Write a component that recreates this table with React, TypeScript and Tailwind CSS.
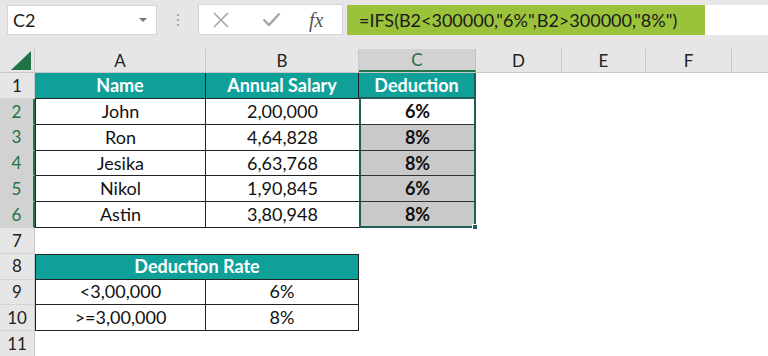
import React from 'react';

const colW = ['w-[171px]', 'w-[153px]', 'w-[117px]', 'w-[86px]', 'w-[84px]', 'w-[86px]'];
const letters = ['A', 'B', 'C', 'D', 'E', 'F'];

const people = [
  { name: 'John', salary: '2,00,000', rate: '6%' },
  { name: 'Ron', salary: '4,64,828', rate: '8%' },
  { name: 'Jesika', salary: '6,63,768', rate: '8%' },
  { name: 'Nikol', salary: '1,90,845', rate: '6%' },
  { name: 'Astin', salary: '3,80,948', rate: '8%' },
];

function RowHead({ n, selected }: { n: number; selected?: boolean }) {
  return (
    <div
      className={
        'w-[35px] shrink-0 h-full flex items-center justify-center border-b border-[#d4d4d4] text-[17px] ' +
        (selected
          ? 'bg-[#d2d2d2] text-[#217346] border-r-2 border-r-[#217346]'
          : 'bg-[#e6e6e6] text-[#222] border-r border-r-[#c6c6c6]')
      }
    >
      {n}
    </div>
  );
}

function TopBar() {
  return (
    <div className="h-[49px] bg-[#e6e6e6] flex items-start pt-[5px]">
      <div className="ml-[7px] w-[150px] h-[30px] bg-white border border-[#d6d6d6] flex items-center justify-between pl-[5px] pr-[9px]">
        <span className="text-[18px] text-[#222]">C2</span>
        <span className="w-0 h-0 border-l-[4px] border-r-[4px] border-t-[4px] border-l-transparent border-r-transparent border-t-[#777]" />
      </div>
      <div className="w-[41px] h-[30px] flex flex-col items-center justify-center gap-[3px]">
        <span className="w-[2px] h-[2px] bg-[#a8a8a8]" />
        <span className="w-[2px] h-[2px] bg-[#a8a8a8]" />
        <span className="w-[2px] h-[2px] bg-[#a8a8a8]" />
      </div>
      <div className="w-[145px] h-[31px] -mt-[1px] bg-white border border-[#d6d6d6] flex items-center">
        <svg width="18" height="18" viewBox="0 0 18 18" className="ml-[13px]">
          <path d="M2 2 L16 16 M16 2 L2 16" stroke="#a6a6a6" strokeWidth="1.6" fill="none" />
        </svg>
        <svg width="19" height="15" viewBox="0 0 19 15" className="ml-[32px]">
          <path d="M1.5 7.5 L7 13 L17.5 1.5" stroke="#a6a6a6" strokeWidth="2.4" fill="none" />
        </svg>
        <span className="ml-[28px] text-[20px] italic text-[#555] font-['Liberation_Serif',serif] leading-none">
          fx
        </span>
      </div>
      <div className="ml-[4px] w-[358px] h-[30px] bg-[#9bc23b] flex items-center pl-[12px] text-[18px] text-[#1a1a1a]">
        =IFS(B2&lt;300000,"6%",B2&gt;300000,"8%")
      </div>
      <div className="flex-1 h-[30px] bg-white" />
    </div>
  );
}

function ColHeader() {
  return (
    <div className="h-[24px] flex bg-[#e6e6e6] border-b border-[#c8c8c8]">
      <div className="w-[35px] shrink-0 h-full flex items-end justify-end pr-[3px] pb-[2px] border-r border-[#c8c8c8]">
        <svg width="20" height="19" viewBox="0 0 20 19">
          <path d="M20 0 L20 19 L0 19 Z" fill="#217346" />
        </svg>
      </div>
      {letters.map((l, i) => (
        <div
          key={l}
          className={
            colW[i] +
            ' shrink-0 h-full flex items-center justify-center text-[17px] ' +
            (l === 'C'
              ? 'bg-[#d2d2d2] text-[#217346] border-b-2 border-[#217346] border-r border-r-[#c0c0c0]'
              : 'text-[#222] border-r border-[#c8c8c8]')
          }
        >
          {l}
        </div>
      ))}
      <div className="flex-1" />
    </div>
  );
}

export default function App() {
  const cell = 'shrink-0 h-full flex items-center justify-center text-[18px] text-[#111]';
  return (
    <div className="w-[768px] h-[356px] bg-white overflow-hidden font-['Lato',sans-serif] relative">
      <TopBar />
      <ColHeader />

      {/* row 1 */}
      <div className="h-[26px] flex">
        <RowHead n={1} />
        <div className={colW[0] + ' ' + cell + ' bg-[#0fa09a] text-white font-bold border-r border-b border-[#222]'}>Name</div>
        <div className={colW[1] + ' ' + cell + ' bg-[#0fa09a] text-white font-bold border-r border-b border-[#222]'}>Annual Salary</div>
        <div className={colW[2] + ' ' + cell + ' bg-[#0fa09a] text-white font-bold border-r-2 border-b-2 border-[#1f5f5b]'}>Deduction</div>
      </div>

      {people.map((p, i) => (
        <div key={p.name} className="h-[25.8px] flex">
          <RowHead n={i + 2} selected />
          <div className={colW[0] + ' ' + cell + ' border-l border-r border-b border-[#222]'}>{p.name}</div>
          <div className={colW[1] + ' ' + cell + ' border-b border-[#222]'}>{p.salary}</div>
          <div
            className={
              colW[2] +
              ' ' +
              cell +
              ' font-bold border-l-2 border-r-2 border-[#1f5f5b] ' +
              (i === 0 ? 'bg-white ' : 'bg-[#c9c9c9] ') +
              (i === 4 ? 'border-b-2' : 'border-b border-b-[#333]')
            }
          >
            {p.rate}
          </div>
        </div>
      ))}

      {/* row 7 */}
      <div className="h-[25.8px] flex">
        <RowHead n={7} />
      </div>

      {/* row 8 */}
      <div className="h-[25.8px] flex">
        <RowHead n={8} />
        <div className={'w-[324px] ' + cell + ' bg-[#0fa09a] text-white font-bold border border-[#222]'}>Deduction Rate</div>
      </div>

      <div className="h-[25.8px] flex">
        <RowHead n={9} />
        <div className={colW[0] + ' ' + cell + ' border-l border-r border-b border-[#222]'}>&lt;3,00,000</div>
        <div className={colW[1] + ' ' + cell + ' border-r border-b border-[#222]'}>6%</div>
      </div>
      <div className="h-[25.8px] flex">
        <RowHead n={10} />
        <div className={colW[0] + ' ' + cell + ' border-l border-r border-b border-[#222]'}>&gt;=3,00,000</div>
        <div className={colW[1] + ' ' + cell + ' border-r border-b border-[#222]'}>8%</div>
      </div>
      <div className="h-[25.8px] flex">
        <RowHead n={11} />
      </div>

      {/* fill handle */}
      <div className="absolute left-[472px] top-[224px] w-[6px] h-[6px] bg-[#1f5f5b] border border-white" />
    </div>
  );
}
